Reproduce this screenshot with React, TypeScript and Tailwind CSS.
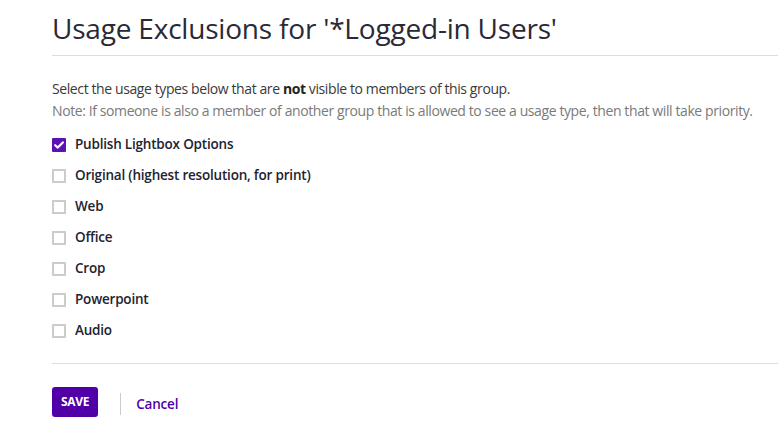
import React, { useState } from 'react';

const usageTypes = [
  'Publish Lightbox Options',
  'Original (highest resolution, for print)',
  'Web',
  'Office',
  'Crop',
  'Powerpoint',
  'Audio',
];

const App: React.FC = () => {
  const [checked, setChecked] = useState<Record<string, boolean>>({ 'Publish Lightbox Options': true });

  const toggle = (name: string) => setChecked((c) => ({ ...c, [name]: !c[name] }));

  return (
    <div className="min-h-[446px] bg-white pl-[52px] font-['Open_Sans',sans-serif] text-[#2b2b33]">
      {/* 見出し */}
      <h1 className="pt-[12px] pb-[11px] text-[28px] leading-[32px] tracking-[-0.2px] text-[#2a2a36] border-b border-[#dddddd]">
        Usage Exclusions for '*Logged-in Users'
      </h1>

      <div className="pt-[22px] text-[14px] leading-[22px] tracking-[-0.4px]">
        <p className="text-[#3a3a3a]">
          Select the usage types below that are <span className="font-bold text-[#222]">not</span> visible to members of this group.
        </p>
        <p className="text-[#7a7a7a]">
          Note: If someone is also a member of another group that is allowed to see a usage type, then that will take priority.
        </p>
      </div>

      <ul className="pt-[7px] pb-[17px] border-b border-[#dddddd]">
        {usageTypes.map((name) => (
          <li key={name} className="h-[31px] flex items-center">
            <label className="flex items-center gap-[9px] cursor-pointer" onClick={() => toggle(name)}>
              {checked[name] ? (
                <span className="w-[14px] h-[14px] bg-[#5a12b5] rounded-[1px] flex items-center justify-center">
                  <svg width="10" height="8" viewBox="0 0 10 8" fill="none">
                    <path d="M1.2 4.2 L3.8 6.6 L8.8 1.4" stroke="white" strokeWidth="2.2" strokeLinecap="round" strokeLinejoin="round" />
                  </svg>
                </span>
              ) : (
                <span className="w-[14px] h-[14px] border-2 border-[#cccccc] bg-white" />
              )}
              <span className="text-[13.5px] font-semibold tracking-[-0.2px] text-[#222230]">{name}</span>
            </label>
          </li>
        ))}
      </ul>

      <div className="pt-[23px] flex items-center">
        <button className="h-[30px] px-[9px] rounded-[3px] bg-[#5000a6] text-white text-[12px] font-bold tracking-[-0.3px]">
          SAVE
        </button>
        <span className="ml-[22px] mt-[3px] w-px h-[22px] bg-[#cccccc]" />
        <a className="ml-[15px] mt-[5px] text-[13.5px] font-semibold tracking-[-0.2px] text-[#5000a6] cursor-pointer">Cancel</a>
      </div>
    </div>
  );
};

export default App;
